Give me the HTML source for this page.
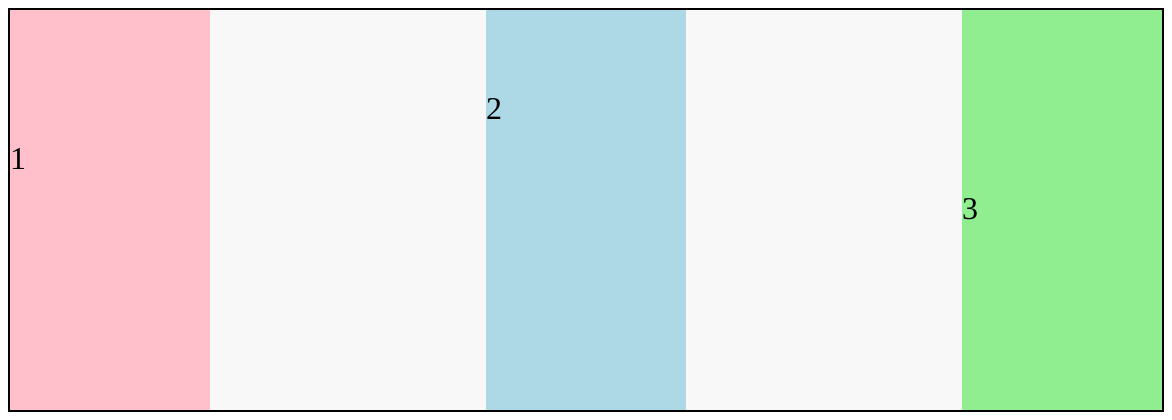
<!DOCTYPE html>
<html><head><style>
html,body{margin:0;padding:0;background:#fff;}
.c{position:absolute;left:8px;top:8px;width:1152px;height:400px;border:2px solid #000;background:#f8f8f8;}
.i{position:absolute;top:0;width:200px;height:400px;font-family:"Liberation Serif",serif;font-size:32px;line-height:37px;}
.i span{position:absolute;left:0;}
</style></head><body>
<div class="c">
<div class="i" style="left:0;background:#ffc0cb"><span style="top:130px">1</span></div>
<div class="i" style="left:476px;background:#add8e6"><span style="top:80px">2</span></div>
<div class="i" style="left:952px;background:#90ee90"><span style="top:180px">3</span></div>
</div>
</body></html>
